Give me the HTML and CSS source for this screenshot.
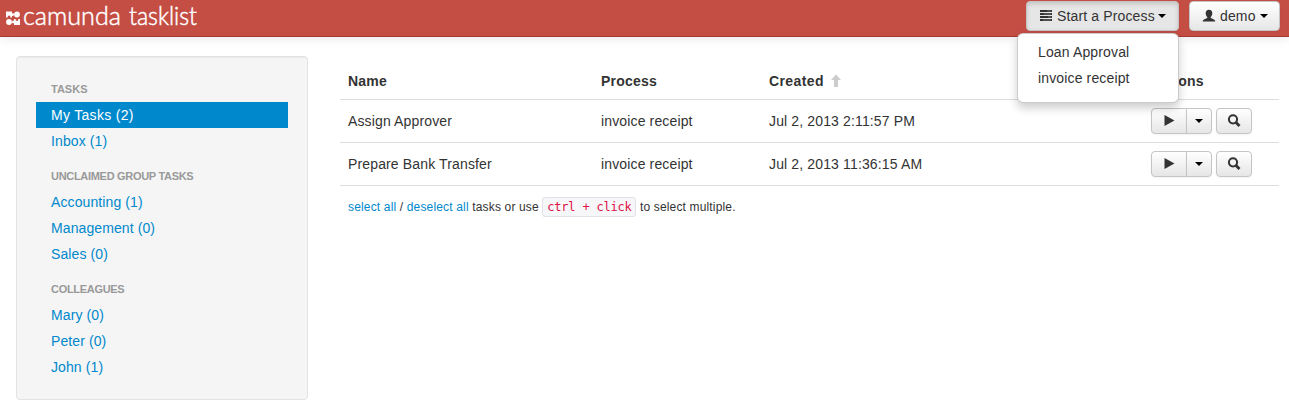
FILE: index.html
```html
<!DOCTYPE html>
<html lang="en">
<head>
<meta charset="utf-8">
<title>camunda tasklist</title>
<link rel="stylesheet" href="styles.css">
</head>
<body>
<svg width="0" height="0" class="defs">
  <symbol id="play" viewBox="0 0 14 14"><path d="M2.500 1 12.500 6.500 2.500 12z"/></symbol>
  <symbol id="search" viewBox="0 0 14 14"><circle cx="6" cy="5.300" r="4.100" fill="none" stroke="currentColor" stroke-width="2"/><path d="M8.800 8.200 12.500 12" fill="none" stroke="currentColor" stroke-width="2.800"/></symbol>
</svg>
<header class="navbar">
  <a class="brand">
    <svg class="mark" width="14" height="14" viewBox="0 0 14 14"><path d="M0 .5h6v1.800a1.400 1.400 0 1 1 0 2.500V6.500H4.300a1.400 1.400 0 1 0-2.500 0H0zM14 14H8v-1.800a1.400 1.400 0 1 1 0-2.500V8h1.700a1.400 1.400 0 1 0 2.500 0H14z"/><circle cx="11" cy="3.500" r="2.900"/><circle cx="3" cy="11" r="2.900"/></svg>
    <svg class="wordmark" width="190" height="36" viewBox="0 0 190 36"><text x="0" y="25" textLength="98" lengthAdjust="spacingAndGlyphs">camunda</text><text x="106" y="25" textLength="68" lengthAdjust="spacingAndGlyphs">tasklist</text></svg>
  </a>
  <div class="nav-actions">
    <div class="dropdown">
      <button class="btn start open"><svg width="14" height="14" viewBox="0 0 14 14"><path d="M1 1h12v2H1zM1 4h12v2H1zM1 7h12v2H1zM1 10h12v2H1z"/><path class="lines" d="M8 2h4M5 5h7M9 8h3M4 11h8"/></svg><span>Start a Process</span><i class="caret"></i></button>
      <ul class="menu"><li>Loan Approval</li><li>invoice receipt</li></ul>
    </div>
    <button class="btn user"><svg width="14" height="14" viewBox="0 0 14 14"><path d="M7 .7c2.200 0 3.300 1.300 3.300 3.500C10.300 6 9.500 7.300 8.700 8v1c1.500.8 4.600 1.300 4.600 3.600H.7C.7 10.300 3.800 9.800 5.300 9V8C4.500 7.300 3.700 6 3.700 4.200 3.700 2 4.800.7 7 .7z"/></svg><span>demo</span><i class="caret"></i></button>
  </div>
</header>
<div class="layout">
  <nav class="sidebar">
    <h3>Tasks</h3>
    <a class="active">My Tasks (2)</a>
    <a>Inbox (1)</a>
    <h3>Unclaimed Group Tasks</h3>
    <a>Accounting (1)</a>
    <a>Management (0)</a>
    <a>Sales (0)</a>
    <h3>Colleagues</h3>
    <a>Mary (0)</a>
    <a>Peter (0)</a>
    <a>John (1)</a>
  </nav>
  <main>
    <table class="tasks">
      <colgroup><col class="c-name"><col class="c-process"><col class="c-created"><col class="c-actions"></colgroup>
      <thead><tr><th>Name</th><th>Process</th><th>Created <svg class="sort" width="14" height="14" viewBox="0 0 14 14"><path d="M7 .5l5 5.500H9V13H5V6H2z"/></svg></th><th>Actions</th></tr></thead>
      <tbody>
        <tr><td>Assign Approver</td><td>invoice receipt</td><td>Jul 2, 2013 2:11:57 PM</td><td><div class="actions"><button class="btn play"><svg width="14" height="14"><use href="#play"/></svg></button><button class="btn toggle"><i class="caret"></i></button><button class="btn find"><svg width="14" height="14"><use href="#search"/></svg></button></div></td></tr>
        <tr><td>Prepare Bank Transfer</td><td>invoice receipt</td><td>Jul 2, 2013 11:36:15 AM</td><td><div class="actions"><button class="btn play"><svg width="14" height="14"><use href="#play"/></svg></button><button class="btn toggle"><i class="caret"></i></button><button class="btn find"><svg width="14" height="14"><use href="#search"/></svg></button></div></td></tr>
      </tbody>
    </table>
    <p class="hint"><a>select all</a> / <a>deselect all</a> tasks or use <code>ctrl + click</code> to select multiple.</p>
  </main>
</div>
</body>
</html>
```
FILE: styles.css
```css
* { box-sizing: border-box; }
body { margin: 0; background: #fff; color: #333; font: 14px/20px "Liberation Sans", Arial, sans-serif; letter-spacing: .14px; }
svg { fill: currentColor; flex: none; }
.defs { display: block; position: absolute; }
.navbar { display: flex; justify-content: space-between; height: 37px; background: #c44d44; border-bottom: 1px solid #a33a32; box-shadow: 0 1px 10px rgba(0,0,0,.1); padding: 0 9px 0 6px; }
.brand { display: flex; color: #fff; }
.mark { margin-top: 11px; }
.wordmark { margin-left: 3px; overflow: visible; font: 300 26px Lato, sans-serif; letter-spacing: 0; stroke: currentColor; stroke-width: .5px; }
.nav-actions { display: flex; gap: 10px; padding-top: 1px; }
.dropdown { position: relative; height: 30px; }
.btn { display: flex; align-items: center; height: 30px; padding: 0 12px; border: 1px solid #c5c5c5; border-radius: 4px; background: linear-gradient(#fff, #e6e6e6); color: #333; font: inherit; letter-spacing: inherit; box-shadow: inset 0 1px 0 rgba(255,255,255,.2), 0 1px 2px rgba(0,0,0,.05); }
.start { width: 153px; padding-left: 12px; }
.user { width: 91px; }
.btn span { margin: 0 4px; white-space: nowrap; }
.start span { margin-right: 3px; }
.open { background: #e6e6e6; box-shadow: inset 0 2px 4px rgba(0,0,0,.15), 0 1px 2px rgba(0,0,0,.05); }
.lines { stroke: #888; stroke-width: .7px; }
.caret { width: 0; height: 0; border: 4px solid transparent; border-top-color: #000; border-bottom: 0; }
.menu { position: absolute; z-index: 2; top: 32px; right: 0; width: 162px; height: 70px; margin: 0; padding: 5px 0; list-style: none; background: #fff; border: 1px solid rgba(0,0,0,.2); border-radius: 6px; box-shadow: 0 5px 10px rgba(0,0,0,.2); }
.menu li { padding: 3px 20px; }
.layout { display: flex; gap: 32px; padding: 19px 10px 0 16px; }
.sidebar { width: 292px; height: 344px; padding: 19px 19px 0; background: #f5f5f5; border: 1px solid #e3e3e3; border-radius: 4px; box-shadow: inset 0 1px 1px rgba(0,0,0,.05); letter-spacing: .1px; }
.sidebar h3 { margin: 9px 0 0; padding: 3px 15px; height: 26px; font-size: 11px; line-height: 20px; letter-spacing: -.3px; color: #999; text-transform: uppercase; }
.sidebar h3:first-child { margin: 0; letter-spacing: 0; }
.sidebar a { display: block; padding: 3px 15px; height: 26px; color: #0088cc; }
.sidebar .active { background: #0088cc; color: #fff; letter-spacing: .3px; }
main { flex: 1; padding-top: 6px; }
.tasks { width: 939px; border-collapse: collapse; table-layout: fixed; }
.c-name { width: 253px; }
.c-process { width: 168px; }
.c-created { width: 382px; }
th, td { padding: 0 0 0 8px; height: 43px; text-align: left; border-bottom: 1px solid #ddd; }
.tasks th { height: 37px; padding-top: 2px; vertical-align: middle; letter-spacing: .2px; }
.tasks th:nth-child(3) { letter-spacing: .4px; }
.sort { margin-left: 1px; color: #ccc; vertical-align: -2px; }
.actions { display: flex; }
.actions .btn { height: 26px; padding: 0; justify-content: center; }
.play { width: 36px; border-radius: 4px 0 0 4px; }
.toggle { width: 26px; margin-left: -1px; border-radius: 0 4px 4px 0; }
.actions .find { width: 36px; margin-left: 4px; }
.hint { margin: 11px 0 0 8px; font-size: 12px; line-height: 20px; letter-spacing: .16px; }
.hint a { color: #0088cc; }
code { padding: 2px 4px; border: 1px solid #e1e1e8; border-radius: 3px; background: #f7f7f9; color: #d14; font: 12px "DejaVu Sans Mono", monospace; letter-spacing: -.22px; }
```
